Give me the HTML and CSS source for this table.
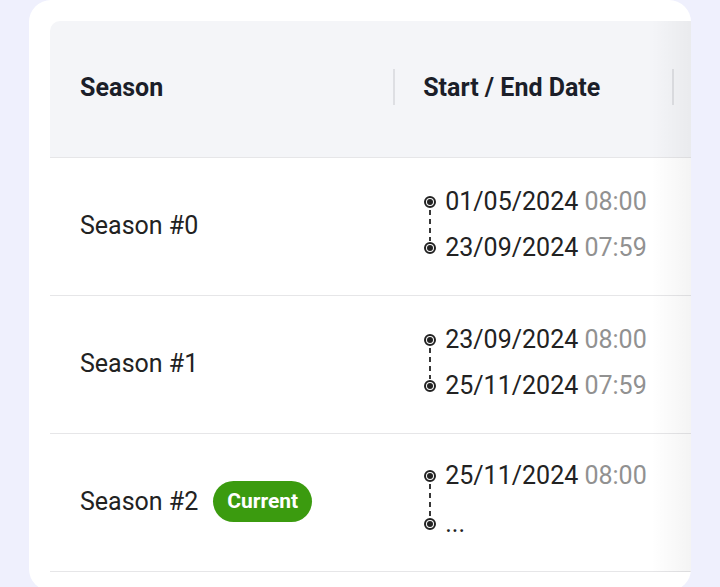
FILE: index.html
```html
<!DOCTYPE html>
<html lang="en">

<head>
    <meta charset="UTF-8">
    <meta name="viewport" content="width=device-width, initial-scale=1.0">
    <title>Seasons</title>
    <link rel="stylesheet" href="styles.css">
</head>

<body>
    <div class="card">
        <div class="table-wrap">
            <div class="table">
                <div class="row head">
                    <div class="cell c1">Season</div>
                    <div class="cell c2"><i class="sep"></i>Start / End Date</div>
                    <div class="cell c3"><i class="sep"></i></div>
                </div>

                <div class="row">
                    <div class="cell c1">Season #0</div>
                    <div class="cell c2">
                        <div class="dates">
                            <svg class="line" width="14" height="92" viewBox="0 0 14 92">
                                <line x1="7" y1="31" x2="7" y2="62" stroke="#222" stroke-width="1.8" stroke-dasharray="5 4" />
                                <circle cx="7" cy="23" r="5" fill="#fff" stroke="#222" stroke-width="2" />
                                <circle cx="7" cy="23" r="3" fill="#222" />
                                <circle cx="7" cy="69" r="5" fill="#fff" stroke="#222" stroke-width="2" />
                                <circle cx="7" cy="69" r="3" fill="#222" />
                            </svg>
                            <div class="lines">
                                <div>01/05/2024 <span class="time">08:00</span></div>
                                <div>23/09/2024 <span class="time">07:59</span></div>
                            </div>
                        </div>
                    </div>
                    <div class="cell c3"></div>
                </div>

                <div class="row">
                    <div class="cell c1">Season #1</div>
                    <div class="cell c2">
                        <div class="dates">
                            <svg class="line" width="14" height="92" viewBox="0 0 14 92">
                                <line x1="7" y1="31" x2="7" y2="62" stroke="#222" stroke-width="1.8" stroke-dasharray="5 4" />
                                <circle cx="7" cy="23" r="5" fill="#fff" stroke="#222" stroke-width="2" />
                                <circle cx="7" cy="23" r="3" fill="#222" />
                                <circle cx="7" cy="69" r="5" fill="#fff" stroke="#222" stroke-width="2" />
                                <circle cx="7" cy="69" r="3" fill="#222" />
                            </svg>
                            <div class="lines">
                                <div>23/09/2024 <span class="time">08:00</span></div>
                                <div>25/11/2024 <span class="time">07:59</span></div>
                            </div>
                        </div>
                    </div>
                    <div class="cell c3"></div>
                </div>

                <div class="row">
                    <div class="cell c1">Season #2 <span class="badge">Current</span></div>
                    <div class="cell c2">
                        <div class="dates">
                            <svg class="line" width="14" height="94" viewBox="0 0 14 94">
                                <line x1="7" y1="31" x2="7" y2="64" stroke="#222" stroke-width="1.8" stroke-dasharray="5 4" />
                                <circle cx="7" cy="23" r="5" fill="#fff" stroke="#222" stroke-width="2" />
                                <circle cx="7" cy="23" r="3" fill="#222" />
                                <circle cx="7" cy="71" r="5" fill="#fff" stroke="#222" stroke-width="2" />
                                <circle cx="7" cy="71" r="3" fill="#222" />
                            </svg>
                            <div class="lines">
                                <div>25/11/2024 <span class="time">08:00</span></div>
                                <div class="more">...</div>
                            </div>
                        </div>
                    </div>
                    <div class="cell c3"></div>
                </div>
            </div>
            <div class="fade"></div>
        </div>
    </div>
</body>

</html>
```

FILE: styles.css
```css
body {
    margin: 0;
    background: #eff0fd;
    font-family: Roboto, "Liberation Sans", sans-serif;
    color: #222;
}

.card {
    margin-left: 29px;
    width: 662px;
    height: 591px;
    padding: 21px 0 0 21px;
    box-sizing: border-box;
    background: #fff;
    border-radius: 22px;
    overflow: hidden;
}

.table-wrap {
    position: relative;
    overflow: hidden;
    border-top-left-radius: 10px;
}

.table {
    width: 900px;
}

.row {
    display: flex;
    height: 137px;
    border-bottom: 1px solid #e6e6e8;
}

.row.head {
    height: 136px;
    background: #f4f5f8;
    font-weight: 700;
    color: #1b1e29;
}

.cell {
    display: flex;
    align-items: center;
    font-size: 25px;
    padding-bottom: 3px;
}

.row.head .cell {
    padding-bottom: 4px;
}

.c1 {
    width: 315px;
    padding-left: 30px;
}

.c2 {
    width: 280px;
}

.c3 {
    width: 280px;
}

.sep {
    width: 2px;
    height: 36px;
    background: #dedfe3;
    margin-right: 28px;
}

.row .c2 .dates {
    margin-left: 30px;
}

.dates {
    display: flex;
    align-items: flex-start;
}

.line {
    flex-shrink: 0;
    margin-right: 8px;
}

.lines div {
    line-height: 46px;
    white-space: nowrap;
}

.lines .more {
    line-height: 50px;
}

.time {
    color: #919191;
}

.badge {
    margin-left: 15px;
    padding: 0 14px;
    height: 41px;
    line-height: 41px;
    border-radius: 21px;
    background: #3b9b0f;
    color: #fff;
    font-size: 21px;
    font-weight: 700;
}

.fade {
    position: absolute;
    top: 0;
    right: 0;
    width: 40px;
    height: 551px;
    background: linear-gradient(to right, rgba(0, 0, 0, 0), rgba(0, 0, 0, 0.045));
    pointer-events: none;
}
```
